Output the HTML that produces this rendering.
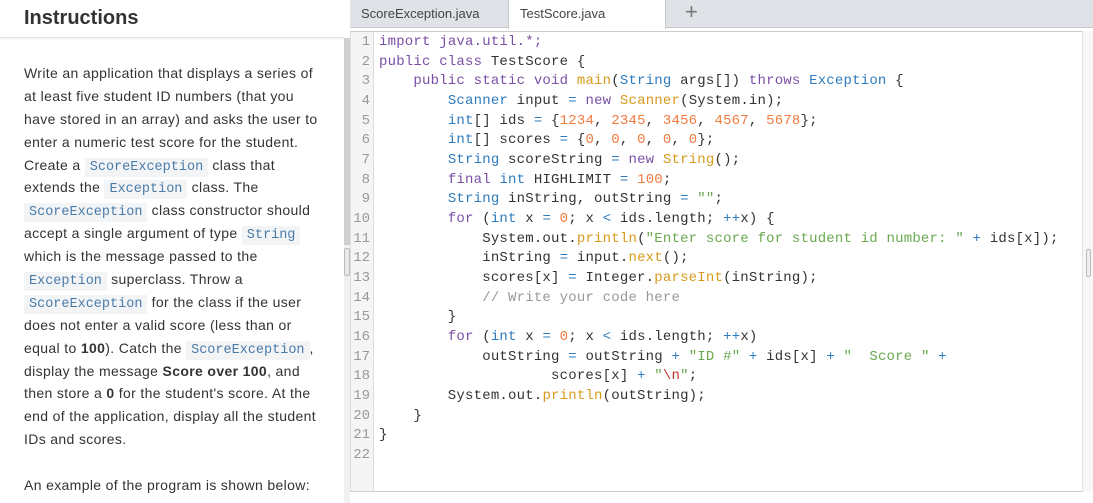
<!DOCTYPE html>
<html><head><meta charset="utf-8"><style>
*{margin:0;padding:0;box-sizing:border-box}
body{width:1093px;height:503px;overflow:hidden;background:#fff;font-family:"Liberation Sans",sans-serif;position:relative}
#left{position:absolute;left:0;top:0;width:344px;height:503px;background:#fff;overflow:hidden}
#hdr{height:38px;border-bottom:1px solid #e3e3e3;padding-left:24px;font-size:20px;font-weight:bold;color:#333;line-height:36px;box-shadow:0 1px 2px rgba(0,0,0,.06)}
#txt{position:absolute;left:24px;top:62px;width:330px;font-size:14px;letter-spacing:0.35px;color:#333;white-space:nowrap}
#txt div{height:22.9px;line-height:22.9px}
code{font-family:"Liberation Mono",monospace;font-size:13.5px;line-height:1;letter-spacing:0;background:#f3f4f6;color:#4a7ba8;padding:2px 5px}
#lsb{position:absolute;left:344px;top:38px;width:6px;height:465px;background:#f1f1f1}
#lsb div{position:absolute;left:0;top:0;width:6px;height:207px;background:#cfcfcf}
#lsb span{position:absolute;left:0;top:210px;width:6px;height:28px;border:1px solid #bbb;background:#e8e8e8;border-radius:2px}
#ed{position:absolute;left:350px;top:0;width:743px;height:503px;background:#fff}
#tabs{height:28px;background:#dfe2e6;border-bottom:1px solid #c8c8c8;position:relative;font-size:13px;color:#444}
.tab{position:absolute;top:0;height:28px;line-height:27px;padding-left:11px}
#code{position:absolute;left:0;top:31px;width:732px;height:461px;border-top:1px solid #ccc;border-bottom:1px solid #ccc}
#gut{position:absolute;left:0;top:0;width:24px;height:459px;background:#f5f5f5;border-right:1px solid #ddd;border-left:1px solid #ddd}
pre{font-family:"Liberation Mono",monospace;font-size:14px;line-height:19.67px;color:#333}
#gut pre{text-align:right;color:#999;padding-right:3px;padding-top:1px}
#src{position:absolute;left:29px;top:1px;letter-spacing:0.2px}
.k{color:#7a4fa6}.t{color:#2e7bbd}.n{color:#f07b3f}.m{color:#d89a1c}.s{color:#6aa84f}.c{color:#999}.o{color:#2e7bbd}
#rsb{position:absolute;left:732px;top:31px;width:11px;height:461px;background:#f7f7f7;border-left:1px solid #e3e3e3}
#rsb div{position:absolute;left:3px;top:218px;width:5px;height:28px;border:1px solid #bbb;border-radius:2px;background:#eee}
</style></head><body>
<div id="left">
<div id="hdr">Instructions</div>
<div id="txt"><div>Write an application that displays a series of</div><div>at least five student ID numbers (that you</div><div>have stored in an array) and asks the user to</div><div>enter a numeric test score for the student.</div><div>Create a <code>ScoreException</code> class that</div><div>extends the <code>Exception</code> class. The</div><div><code>ScoreException</code> class constructor should</div><div>accept a single argument of type <code>String</code></div><div>which is the message passed to the</div><div><code>Exception</code> superclass. Throw a</div><div><code>ScoreException</code> for the class if the user</div><div>does not enter a valid score (less than or</div><div>equal to <b>100</b>). Catch the <code>ScoreException</code>,</div><div>display the message <b>Score over 100</b>, and</div><div>then store a <b>0</b> for the student's score. At the</div><div>end of the application, display all the student</div><div>IDs and scores.</div><div></div><div>An example of the program is shown below:</div></div>
</div>
<div id="lsb"><div></div><span></span></div>
<div id="ed">
<div id="tabs">
<div class="tab" style="left:0;width:158px">ScoreException.java</div>
<div class="tab" style="left:158px;width:158px;background:#fff;height:29px;border-left:1px solid #c8c8c8;border-right:1px solid #c8c8c8">TestScore.java</div>
<div class="tab" style="left:324px;font-size:22px;color:#777;line-height:24px">+</div>
</div>
<div id="code">
<div id="gut"><pre>1
2
3
4
5
6
7
8
9
10
11
12
13
14
15
16
17
18
19
20
21
22</pre></div>
<pre id="src"><span class="k">import</span> <span class="k">java.util.*;</span>
<span class="k">public class</span> TestScore {
    <span class="k">public static void</span> <span class="m">main</span>(<span class="t">String</span> args[]) <span class="k">throws</span> <span class="t">Exception</span> {
        <span class="t">Scanner</span> input <span class="o">=</span> <span class="k">new</span> <span class="m">Scanner</span>(System.in);
        <span class="t">int</span>[] ids <span class="o">=</span> {<span class="n">1234</span>, <span class="n">2345</span>, <span class="n">3456</span>, <span class="n">4567</span>, <span class="n">5678</span>};
        <span class="t">int</span>[] scores <span class="o">=</span> {<span class="n">0</span>, <span class="n">0</span>, <span class="n">0</span>, <span class="n">0</span>, <span class="n">0</span>};
        <span class="t">String</span> scoreString <span class="o">=</span> <span class="k">new</span> <span class="m">String</span>();
        <span class="k">final</span> <span class="t">int</span> HIGHLIMIT <span class="o">=</span> <span class="n">100</span>;
        <span class="t">String</span> inString, outString <span class="o">=</span> <span class="s">""</span>;
        <span class="k">for</span> (<span class="t">int</span> x <span class="o">=</span> <span class="n">0</span>; x <span class="o">&lt;</span> ids.length; <span class="o">++</span>x) {
            System.out.<span class="m">println</span>(<span class="s">"Enter score for student id number: "</span> <span class="o">+</span> ids[x]);
            inString <span class="o">=</span> input.<span class="m">next</span>();
            scores[x] <span class="o">=</span> Integer.<span class="m">parseInt</span>(inString);
            <span class="c">// Write your code here</span>
        }
        <span class="k">for</span> (<span class="t">int</span> x <span class="o">=</span> <span class="n">0</span>; x <span class="o">&lt;</span> ids.length; <span class="o">++</span>x)
            outString <span class="o">=</span> outString <span class="o">+</span> <span class="s">"ID #"</span> <span class="o">+</span> ids[x] <span class="o">+</span> <span class="s">"  Score "</span> <span class="o">+</span>
                    scores[x] <span class="o">+</span> <span class="s">"<span style="color:#c0392b">\n</span>"</span>;
        System.out.<span class="m">println</span>(outString);
    }
}
</pre>
</div>
<div id="rsb"><div></div></div>
</div>
</body></html>
